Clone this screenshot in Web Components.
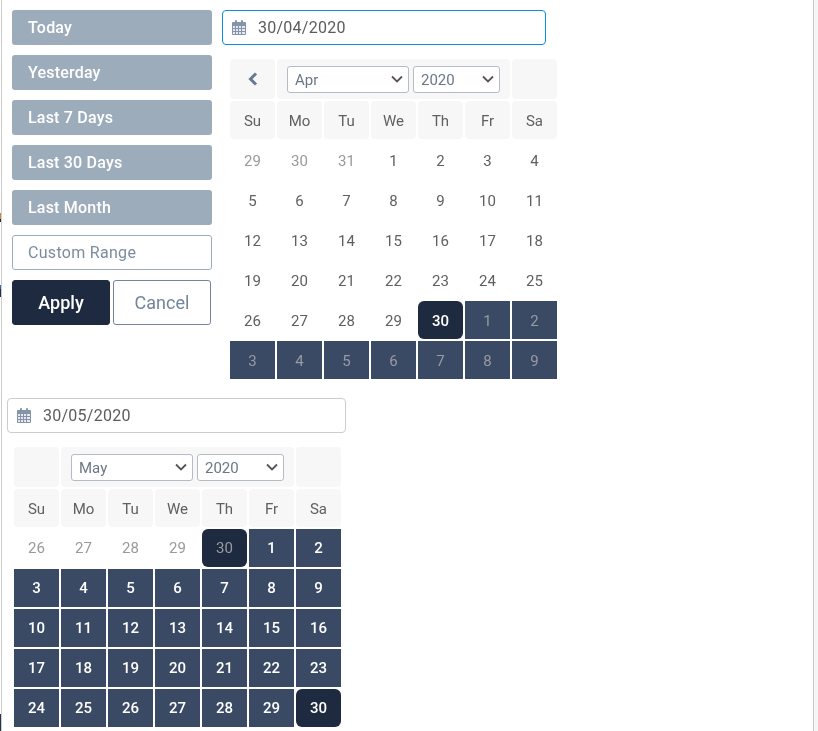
<!DOCTYPE html>
<html>
<head>
<meta charset="utf-8">
<title>Date range picker</title>
<style>
  html, body { margin: 0; height: 100%; overflow: hidden; }
  body {
    font-family: Roboto, "Liberation Sans", sans-serif;
    background:
      linear-gradient(#fff 0 213px, #c98a35 213px 219px, #1f2d45 219px 222px, #fff 222px 285px, #2f6f9f 285px 289px, #1f2d45 289px 297px, #fff 297px 714px, #25344c 714px) left top / 1px 100% no-repeat,
      #f6f6f6;
  }
</style>
</head>
<body>
<range-picker>
  <div slot="ranges">
    <range-button>Today</range-button>
    <range-button>Yesterday</range-button>
    <range-button>Last 7 Days</range-button>
    <range-button>Last 30 Days</range-button>
    <range-button>Last Month</range-button>
    <range-button outline>Custom Range</range-button>
    <action-buttons></action-buttons>
  </div>
  <date-input slot="start" value="30/04/2020" focused></date-input>
  <month-calendar slot="start" month="Apr" prev lead="29,30,31" days="30"></month-calendar>
  <date-input slot="end" value="30/05/2020"></date-input>
  <month-calendar slot="end" month="May" lead="26,27,28,29,30" days="30"></month-calendar>
</range-picker>

<script>
class RangePicker extends HTMLElement {
  constructor() {
    super();
    this.attachShadow({ mode: "open" }).innerHTML = `
<style>
  :host {
    display: block;
    box-sizing: border-box;
    width: 813px;
    height: 731px;
    margin-left: 1px;
    padding: 10px 0 0 10px;
    background: #fff;
    border-left: 1px solid #ccc;
    border-right: 1px solid #ccc;
    overflow: hidden;
    will-change: transform;
  }
  .top { display: flex; height: 388px; }
  .ranges { width: 210px; }
  .start { width: 324px; --day-pad: 2px; }
  .end { width: 339px; margin-left: -5px; --cal-left: 7px; }
</style>
<div class="top">
  <div class="ranges"><slot name="ranges"></slot></div>
  <div class="start"><slot name="start"></slot></div>
</div>
<div class="end"><slot name="end"></slot></div>
`;
  }
}

class RangeButton extends HTMLElement {
  constructor() {
    super();
    this.attachShadow({ mode: "open" }).innerHTML = `
<style>
  :host {
    display: block;
    box-sizing: border-box;
    width: 200px;
    height: 35px;
    margin-bottom: 10px;
    padding: 0 16px;
    background: #9dacbb;
    border-radius: 3px;
    color: #fff;
    font-size: 16px;
    font-weight: 500;
    letter-spacing: .2px;
    line-height: 35px;
  }
  :host([outline]) {
    background: #fff;
    border: 1px solid #9dacbb;
    padding: 0 15px;
    color: #7b8ca0;
    font-weight: 400;
    letter-spacing: .3px;
    line-height: 33px;
  }
</style>
<slot></slot>
`;
  }
}

class ActionButtons extends HTMLElement {
  constructor() {
    super();
    this.attachShadow({ mode: "open" }).innerHTML = `
<style>
  :host { display: flex; gap: 3px; font-size: 18px; }
  div {
    box-sizing: border-box;
    width: 98px;
    height: 45px;
    border-radius: 3px;
    text-align: center;
    line-height: 43px;
  }
  .apply { background: #1e2a3f; border: 1px solid #1e2a3f; color: #fff; font-weight: 500; }
  .cancel { border: 1px solid #73859c; color: #73859c; }
</style>
<div class="apply">Apply</div>
<div class="cancel">Cancel</div>
`;
  }
}

class DateInput extends HTMLElement {
  constructor() {
    super();
    this.attachShadow({ mode: "open" }).innerHTML = `
<style>
  :host {
    display: flex;
    align-items: center;
    box-sizing: border-box;
    height: 35px;
    padding-left: 9px;
    background: #fff;
    border: 1px solid #ccc;
    border-radius: 4px;
    color: #5c5c5c;
    font-size: 16px;
    letter-spacing: .25px;
  }
  :host([focused]) { border-color: #0b8fd6; }
  svg { width: 14px; height: 15px; margin-right: 12px; }
</style>
<svg viewBox="0 0 14 15" aria-hidden="true">
  <path fill="#8594a9" d="M1 2h2V1a1 1 0 0 1 2 0v1h4V1a1 1 0 0 1 2 0v1h2a1 1 0 0 1 1 1v11a1 1 0 0 1-1 1H1a1 1 0 0 1-1-1V3a1 1 0 0 1 1-1z"/>
  <path fill="#e6eaef" d="M1 6h2v2H1zM4 6h2v2H4zM7 6h2v2H7zM10 6h3v2h-3zM1 9h2v2H1zM4 9h2v2H4zM7 9h2v2H7zM10 9h3v2h-3zM1 12h2v2H1zM4 12h2v2H4zM7 12h2v2H7zM10 12h3v2h-3z"/>
</svg>
<span></span>
`;
  }
  connectedCallback() {
    this.shadowRoot.querySelector("span").textContent = this.getAttribute("value");
  }
}

const WEEK = ["Su", "Mo", "Tu", "We", "Th", "Fr", "Sa"];
const CHEVRON = "url(\"data:image/svg+xml,%3Csvg xmlns='http://www.w3.org/2000/svg' width='12' height='8'%3E%3Cpath d='M1 1.5l5 5 5-5' fill='none' stroke='%23555' stroke-width='1.8'/%3E%3C/svg%3E\")";

class MonthCalendar extends HTMLElement {
  constructor() {
    super();
    this.attachShadow({ mode: "open" });
  }
  connectedCallback() {
    const month = this.getAttribute("month");
    const lead = this.getAttribute("lead").split(",");
    const days = Number(this.getAttribute("days"));
    const hasPrev = this.hasAttribute("prev");
    let cells = "";

    if (month == "Apr") {
      cells += lead.map((d) => `<div class="d off">${d}</div>`).join("");
      for (let d = 1; d <= days; d++) {
        cells += `<div class="d ${d == 30 ? "end" : ""}">${d}</div>`;
      }
      for (let d = 1; d <= 9; d++) {
        cells += `<div class="d range off">${d}</div>`;
      }
    } else {
      cells += lead.map((d) => `<div class="d off ${d == 30 ? "end" : ""}">${d}</div>`).join("");
      for (let d = 1; d <= days; d++) {
        cells += `<div class="d ${d == 30 ? "end" : "range"}">${d}</div>`;
      }
    }

    this.shadowRoot.innerHTML = `
<style>
  :host {
    display: grid;
    grid-template-columns: repeat(7, 45px);
    grid-template-rows: 40px 38px repeat(6, 38px);
    gap: 2px;
    margin: 14px 0 0 var(--cal-left, 8px);
    font-size: 15px;
    color: #606060;
  }
  .h { background: #f7f7f7; border-radius: 4px; display: flex; align-items: center; justify-content: center; }
  .wk { box-sizing: border-box; padding-top: 2px; }
  .mid { grid-column: span 5; gap: 4px; }
  .d { box-sizing: border-box; padding-top: var(--day-pad, 0); display: flex; align-items: center; justify-content: center; }
  .d.off { color: #999; }
  .range { background: #3a4964; color: #fff; }
  .end { background: #1e2a3f; color: #fff; border-radius: 6px; }
  .d.range:not(.off), .d.end:not(.off) { font-weight: 500; }
  .d.off.range, .d.off.end { color: #979ba3; }
  select {
    appearance: none;
    box-sizing: border-box;
    height: 27px;
    padding: 2px 3px 0 7px;
    background: #fff ${CHEVRON} no-repeat right 5px center;
    border: 1px solid #b4bcc6;
    border-radius: 3px;
    color: #6b7785;
    font: 15px Roboto, sans-serif;
  }
  .m { width: 122px; }
  .y { width: 87px; }
  svg { width: 12px; height: 14px; }
</style>
<div class="h">${hasPrev ? `<svg viewBox="0 0 12 14"><path d="M9 1.5 3.5 7 9 12.5" fill="none" stroke="#66788f" stroke-width="3"/></svg>` : ""}</div>
<div class="h mid">
  <select class="m"><option>${month}</option></select>
  <select class="y"><option>2020</option></select>
</div>
<div class="h"></div>
${WEEK.map((w) => `<div class="h wk">${w}</div>`).join("")}
${cells}
`;
  }
}

customElements.define("range-picker", RangePicker);
customElements.define("range-button", RangeButton);
customElements.define("action-buttons", ActionButtons);
customElements.define("date-input", DateInput);
customElements.define("month-calendar", MonthCalendar);
</script>
</body>
</html>
